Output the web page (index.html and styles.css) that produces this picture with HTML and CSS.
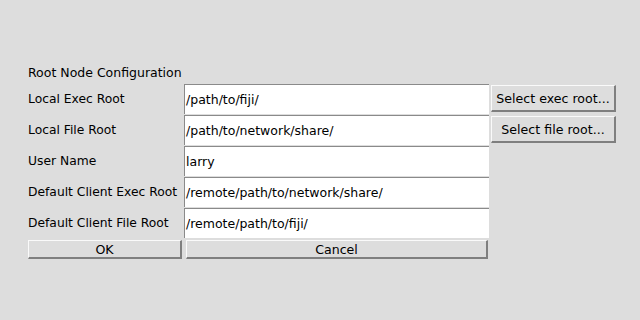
FILE: index.html
```html
<!DOCTYPE html>
<html>
<head>
<meta charset="utf-8">
<link rel="stylesheet" href="styles.css">
</head>
<body>
<div class="dialog">
  <div class="title">Root Node Configuration</div>
  <div class="form">
    <div class="label">Local Exec Root</div>
    <div class="field">/path/to/fiji/</div>
    <div class="btncell"><div class="btn">Select exec root...</div></div>

    <div class="label">Local File Root</div>
    <div class="field">/path/to/network/share/</div>
    <div class="btncell"><div class="btn">Select file root...</div></div>

    <div class="label">User Name</div>
    <div class="field">larry</div>
    <div class="btncell"></div>

    <div class="label">Default Client Exec Root</div>
    <div class="field">/remote/path/to/network/share/</div>
    <div class="btncell"></div>

    <div class="label">Default Client File Root</div>
    <div class="field">/remote/path/to/fiji/</div>
    <div class="btncell"></div>
  </div>
  <div class="actions">
    <div class="btn ok">OK</div>
    <div class="btn cancel">Cancel</div>
  </div>
</div>
</body>
</html>
```
FILE: styles.css
```css
html, body {
  margin: 0;
  padding: 0;
  background: #dddddd;
  width: 640px;
  height: 320px;
  overflow: hidden;
}
.dialog {
  padding: 64px 0 0 28px;
  font-family: "DejaVu Sans", sans-serif;
  font-size: 12.5px;
  color: #000;
}
.title {
  height: 18px;
  line-height: 18px;
  margin-bottom: 2px;
}
.form {
  display: grid;
  grid-template-columns: 154px 305px 125px;
  grid-auto-rows: 30px;
  column-gap: 2px;
  row-gap: 1px;
}
.label {
  display: flex;
  align-items: center;
  white-space: nowrap;
  font-size: 12.3px;
}
.field {
  background: #fff;
  border-top: 1px solid #8a8a8a;
  border-left: 1px solid #8a8a8a;
  padding-left: 1px;
  display: flex;
  align-items: center;
  font-size: 12.5px;
  white-space: nowrap;
}
.btncell {
  padding: 1px 0 2px 0;
  display: flex;
}
.btn {
  box-sizing: border-box;
  flex: 1;
  display: flex;
  align-items: center;
  justify-content: center;
  border-top: 1px solid #fafafa;
  border-left: 1px solid #fafafa;
  border-right: 2px solid #7f7f7f;
  border-bottom: 2px solid #7f7f7f;
  background: #dddddd;
  font-size: 12.6px;
  white-space: nowrap;
}
.actions {
  display: flex;
  gap: 4px;
  margin-top: 2px;
  height: 19px;
}
.ok {
  flex: none;
  width: 154px;
}
.cancel {
  flex: none;
  width: 302px;
}
```
